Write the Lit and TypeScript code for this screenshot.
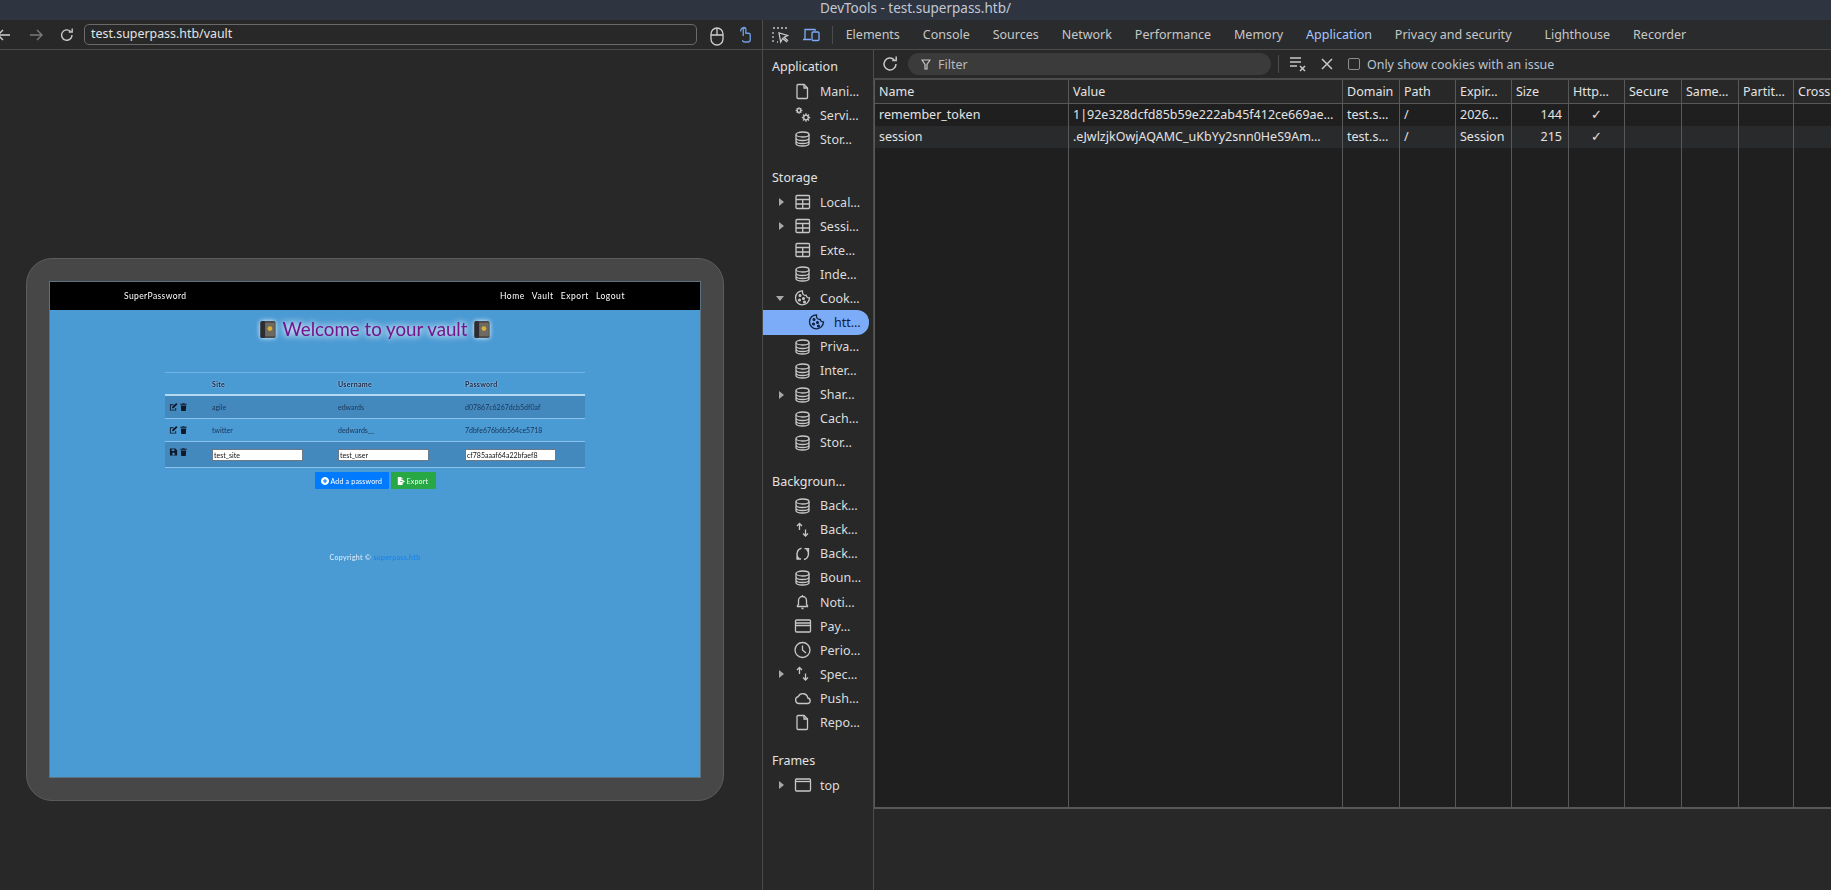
import { LitElement, html, css, svg } from 'lit';
import { customElement } from 'lit/decorators.js';

const paths: Record<string, unknown> = {
  file: svg`<path d="M4 2.500h6l3.500 3.500v9.500a1 1 0 0 1-1 1H4a1 1 0 0 1-1-1v-12a1 1 0 0 1 1-1z"/><path d="M10 2.500V6h3.500"/>`,
  gears: svg`<circle cx="5" cy="4.500" r="1.800"/><path d="M5 1.200v1.300M5 6.500v1.300M1.700 4.500H3M7 4.500h1.300M2.700 2.200l.9.9M6.400 5.900l.9.9M7.300 2.200l-.9.9M3.600 5.900l-.9.9"/><circle cx="12" cy="11.500" r="2.300"/><path d="M12 7.300v1.900M12 13.800v1.900M7.800 11.500h1.900M14.300 11.500h1.900M9 8.500l1.300 1.300M13.700 13.200l1.300 1.300M15 8.500l-1.300 1.300M10.300 13.200L9 14.500"/>`,
  db: svg`<ellipse cx="8.500" cy="4.500" rx="6.500" ry="2.500"/><path d="M2 4.500v9c0 1.400 2.900 2.500 6.500 2.500s6.500-1.100 6.500-2.500v-9M2 8c0 1.400 2.900 2.500 6.500 2.500S15 9.400 15 8M2 11c0 1.400 2.900 2.500 6.500 2.500S15 12.400 15 11"/>`,
  table: svg`<rect x="2" y="2.500" width="13.500" height="13" rx="1"/><path d="M2 6.500h13.500M2 11h13.500M8.700 6.500v9"/>`,
  cookie: svg`<path d="M8.500 1.800a7 7 0 1 0 7 7.200 3 3 0 0 1-3.300-2.700 3 3 0 0 1-3.700-3.300z"/><circle cx="6" cy="6.500" r=".9" fill="currentColor"/><circle cx="5.500" cy="11" r=".9" fill="currentColor"/><circle cx="9.500" cy="9.500" r=".9" fill="currentColor"/><circle cx="10.500" cy="13" r=".9" fill="currentColor"/>`,
  updown: svg`<path d="M5.500 9V2.500M3 5l2.500-2.500L8 5M11.500 8.500V15M9 12.500l2.500 2.500 2.500-2.500"/>`,
  sync: svg`<path d="M7.500 3.200A6 6 0 0 0 5 13.500M3 9.800V14h4M10 14.500A6 6 0 0 0 12.500 4.200M14.500 8V3.700h-4"/>`,
  bell: svg`<path d="M3.500 13.500h10v-1l-1-1V7.500a4 4 0 0 0-8 0v4l-1 1zM7.500 15.500h2M8.500 2v1.500"/>`,
  card: svg`<rect x="1.500" y="3" width="15" height="12" rx="1"/><path d="M1.500 6h15M1.500 8.500h15"/>`,
  clock: svg`<circle cx="8.500" cy="9" r="7.500"/><path d="M8.500 4.500V9l3.500 3"/>`,
  cloud: svg`<path d="M5 14.500a3.500 3.500 0 0 1-.7-6.900 5 5 0 0 1 9.500 1.400 2.800 2.800 0 0 1 .2 5.500z"/>`,
  frame: svg`<rect x="1.500" y="3" width="15" height="12" rx="1"/><path d="M1.500 5.500h15"/>`,
};

function icon(name: string) {
  return html`<svg class="ico" viewBox="0 0 18 18">${paths[name]}</svg>`;
}

type Item = { label?: string; text?: string; icon?: string; arrow?: string; nested?: boolean; selected?: boolean };

const sidebar: Item[] = [
  { label: 'Application' },
  { text: 'Mani…', icon: 'file' },
  { text: 'Servi…', icon: 'gears' },
  { text: 'Stor…', icon: 'db' },
  { label: 'Storage' },
  { text: 'Local…', icon: 'table', arrow: 'right' },
  { text: 'Sessi…', icon: 'table', arrow: 'right' },
  { text: 'Exte…', icon: 'table' },
  { text: 'Inde…', icon: 'db' },
  { text: 'Cook…', icon: 'cookie', arrow: 'down' },
  { text: 'htt…', icon: 'cookie', nested: true, selected: true },
  { text: 'Priva…', icon: 'db' },
  { text: 'Inter…', icon: 'db' },
  { text: 'Shar…', icon: 'db', arrow: 'right' },
  { text: 'Cach…', icon: 'db' },
  { text: 'Stor…', icon: 'db' },
  { label: 'Backgroun…' },
  { text: 'Back…', icon: 'db' },
  { text: 'Back…', icon: 'updown' },
  { text: 'Back…', icon: 'sync' },
  { text: 'Boun…', icon: 'db' },
  { text: 'Noti…', icon: 'bell' },
  { text: 'Pay…', icon: 'card' },
  { text: 'Perio…', icon: 'clock' },
  { text: 'Spec…', icon: 'updown', arrow: 'right' },
  { text: 'Push…', icon: 'cloud' },
  { text: 'Repo…', icon: 'file' },
  { label: 'Frames' },
  { text: 'top', icon: 'frame', arrow: 'right' },
];

const tabs = ['Elements', 'Console', 'Sources', 'Network', 'Performance', 'Memory', 'Application', 'Privacy and security', 'Lighthouse', 'Recorder'];

const columns = [
  ['Name', 194], ['Value', 274], ['Domain', 57], ['Path', 56], ['Expir…', 56], ['Size', 57],
  ['Http…', 56], ['Secure', 57], ['Same…', 57], ['Partit…', 55], ['Cross', 60],
] as const;

const cookies = [
  ['remember_token', '1|92e328dcfd85b59e222ab45f412ce669ae…', 'test.s…', '/', '2026…', '144', '✓'],
  ['session', '.eJwlzjkOwjAQAMC_uKbYy2snn0HeS9Am…', 'test.s…', '/', 'Session', '215', '✓'],
];

@customElement('vault-page')
export class VaultPage extends LitElement {
  static styles = css`
    :host {
      display: flex;
      flex-direction: column;
      align-items: center;
      width: 650px;
      height: 495px;
      background: #4a9ad4;
      font-family: Lato, sans-serif;
      filter: blur(0.45px);
      box-shadow: 0 0 0 1px #5b7280;
    }
    nav {
      align-self: stretch;
      height: 28px;
      background: #000;
      color: #fff;
      font-size: 8.500px;
      letter-spacing: 0.4px;
      display: flex;
      align-items: center;
      padding: 0 75px 0 74px;
    }
    nav .links { margin-left: auto; display: flex; gap: 7px; letter-spacing: 0.55px; }
    h1 {
      margin: 7px 0 0;
      height: 36px;
      display: flex;
      gap: 6px;
      align-items: flex-start;
      font-size: 18.700px;
      line-height: 24px;
      font-weight: 400;
      color: #74148c;
      text-shadow: 0 0 6px #f4faff, 0 0 9px #e8f4ff;
    }
    .safe { width: 18px; height: 19px; margin-top: 3px; filter: drop-shadow(0 0 2.500px #f4faff); }
    table {
      margin-top: 19px;
      width: 420px;
      table-layout: fixed;
      border-collapse: collapse;
      font-size: 7px;
      color: #1b3556;
      border-top: 1px solid #71b3e4;
    }
    th {
      height: 21px;
      text-align: left;
      padding: 0 5px;
      font-weight: 700;
      letter-spacing: 0.3px;
      color: #14233f;
      text-shadow: 0 0 2px #cde4f6;
      border-bottom: 2px solid #b4d8f0;
    }
    td { height: 22px; padding: 0 5px; border-bottom: 1px solid #8cc2ea; }
    tr.odd td { background: #4489bd; }
    .row-icons { display: flex; gap: 1px; margin-left: -1px; margin-top: -1px; }
    .row-icons svg { width: 9px; height: 10px; fill: #10182a; }
    tr.edit td { height: 25px; vertical-align: middle; }
    tr.edit .row-icons { margin-top: -5px; }
    .field {
      width: 91px;
      height: 12px;
      box-sizing: border-box;
      background: #fff;
      border: 1px solid #6b7a88;
      color: #111;
      line-height: 10px;
      padding-left: 1px;
      margin-top: 1px;
    }
    .actions { display: flex; gap: 2px; margin-top: 4px; }
    .btn {
      height: 17px;
      display: flex;
      align-items: center;
      gap: 2px;
      padding: 0 5px 0 6px;
      color: #fff;
      font-size: 7px;
      letter-spacing: 0.2px;
      border-radius: 1px;
      white-space: nowrap;
    }
    .btn svg { width: 8px; height: 8px; fill: #fff; flex: none; }
    .btn.add { background: #007bff; width: 63px; }
    .btn.export { background: #28a745; width: 34px; }
    footer { margin-top: 64px; font-size: 7px; letter-spacing: 0.35px; color: #e6f2fb; }
    footer span { color: #1680ea; }
  `;

  safe() {
    return html`<svg class="safe" viewBox="0 0 18 20">
      <rect x="1" y="1" width="16" height="18" rx="2" fill="#4c4a4a" />
      <rect x="1" y="1" width="5" height="18" rx="2" fill="#2d2d31" />
      <rect x="6" y="3" width="10" height="14" fill="#6f6a60" />
      <circle cx="11" cy="9" r="2.500" fill="#d8b13a" />
    </svg>`;
  }

  editIcons(saved: boolean) {
    const first = saved
      ? svg`<path d="M1 1h6l2 2v6H1zM3 2v2h3V2zM5 5.500a1.500 1.500 0 1 0 .01 0z" fill-rule="evenodd"/>`
      : svg`<path d="M1 2h4v1H2v5h5V6h1v3H1zM8 .5l1.500 1.500L5 6.500H3.500V5z"/>`;
    return html`<div class="row-icons">
      <svg viewBox="0 0 10 10">${first}</svg>
      <svg viewBox="0 0 10 10"><path d="M1.500 1.500h2l.5-.7h2l.5.7h2v1h-7zM2 3.200h6l-.5 6.300h-5z" /></svg>
    </div>`;
  }

  render() {
    return html`
      <nav>
        <span>SuperPassword</span>
        <div class="links"><span>Home</span><span>Vault</span><span>Export</span><span>Logout</span></div>
      </nav>
      <h1>${this.safe()}<span>Welcome to your vault</span>${this.safe()}</h1>
      <table>
        <colgroup><col style="width:42px" /><col style="width:126px" /><col style="width:127px" /><col style="width:125px" /></colgroup>
        <tr><th></th><th>Site</th><th>Username</th><th>Password</th></tr>
        <tr class="odd"><td>${this.editIcons(false)}</td><td>agile</td><td>edwards</td><td>d07867c6267dcb5df0af</td></tr>
        <tr><td>${this.editIcons(false)}</td><td>twitter</td><td>dedwards__</td><td>7dbfe676b6b564ce5718</td></tr>
        <tr class="odd edit">
          <td>${this.editIcons(true)}</td>
          <td><div class="field">test_site</div></td>
          <td><div class="field">test_user</div></td>
          <td><div class="field">cf785aaaf64a22bfaef8</div></td>
        </tr>
      </table>
      <div class="actions">
        <div class="btn add">
          <svg viewBox="0 0 10 10"><path d="M5 0a5 5 0 1 0 .01 0zM4.300 2.500h1.400v1.800h1.800v1.400H5.700v1.800H4.300V5.700H2.500V4.300h1.800z" fill-rule="evenodd" /></svg>
          Add a password
        </div>
        <div class="btn export">
          <svg viewBox="0 0 10 10"><path d="M1 0h4v3h2v2H4v1h3v4H1zM5.500 0L7 1.500V2.500H5.500zM7 3.500L10 5.500 7 7.500z" /></svg>
          Export
        </div>
      </div>
      <footer>Copyright © <span>superpass.htb</span></footer>
    `;
  }
}

@customElement('app-root')
export class AppRoot extends LitElement {
  static styles = css`
    :host {
      display: flex;
      flex-direction: column;
      width: 1831px;
      height: 890px;
      overflow: hidden;
      background: #282828;
      color: #e3e3e3;
      font-family: 'Noto Sans', sans-serif;
      font-size: 12px;
    }
    .ico {
      width: 18px;
      height: 18px;
      flex: none;
      fill: none;
      stroke: currentColor;
      stroke-width: 1.300;
      color: #c7c7c7;
    }
    .title {
      height: 20px;
      background: #2f3441;
      color: #c3c8d2;
      font-size: 13.500px;
      line-height: 16px;
      text-align: center;
    }
    .main { flex: 1; display: flex; min-height: 0; }

    .left { width: 762px; flex: none; display: flex; flex-direction: column; border-right: 1px solid #4a4a4a; }
    .urlbar {
      height: 29px;
      flex: none;
      display: flex;
      align-items: center;
      border-bottom: 1px solid #4c4c4c;
      overflow: hidden;
    }
    .nav-ico { width: 16px; height: 16px; fill: none; stroke-width: 1.400; flex: none; }
    .back { margin-left: -4px; stroke: #d0d0d0; }
    .forward { margin-left: 16px; stroke: #7a7a7a; }
    .reload { margin-left: 15px; stroke: #c8c8c8; }
    .address {
      margin-left: 9px;
      width: 613px;
      height: 21px;
      box-sizing: border-box;
      border: 1px solid #6a6a6a;
      border-radius: 5px;
      padding-left: 6px;
      font-size: 12.400px;
      line-height: 18px;
      color: #e3e3e3;
    }
    .mouse { width: 16px; height: 20px; margin-left: 12px; margin-top: 3px; stroke: #d0d0d0; fill: none; stroke-width: 1.300; flex: none; }
    .touch { width: 14px; height: 18px; margin-left: 13px; stroke: #6d9fe6; fill: none; stroke-width: 1.500; flex: none; }
    .viewport { flex: 1; padding: 208px 0 0 26px; }
    .device {
      width: 650px;
      height: 495px;
      padding: 23px;
      border: 1px solid #5c5c5c;
      border-radius: 26px;
      background: #464746;
      box-sizing: content-box;
    }

    .tools { flex: 1; min-width: 0; display: flex; flex-direction: column; }
    .tabs {
      height: 29px;
      flex: none;
      display: flex;
      align-items: center;
      gap: 22.900px;
      border-bottom: 1px solid #4c4c4c;
      background: #2a2b2c;
      font-size: 12.500px;
      color: #c7c7c7;
      white-space: nowrap;
      overflow: hidden;
    }
    .tab-ico { width: 18px; height: 18px; fill: none; stroke-width: 1.300; flex: none; }
    .tabs .inspect { margin-left: 8px; stroke: #c7c7c7; }
    .tabs .devices { margin-left: -10px; stroke: #7cacf8; }
    .tabs .sep { width: 1px; height: 18px; background: #4c4c4c; margin: 0 -10px 0 -11px; }
    .tabs .active { color: #a8c7fa; }
    .tabs .spaced { margin-left: 10px; }
    .body { flex: 1; min-height: 0; display: flex; }
    .side { width: 110px; flex: none; border-right: 1px solid #4c4c4c; padding-top: 5px; }
    .side .label { height: 24.100px; line-height: 24px; padding-left: 9px; font-size: 12.500px; color: #e3e3e3; }
    .side .label.gap { margin-top: 14.500px; }
    .row { height: 24.100px; display: flex; align-items: center; position: relative; font-size: 12.500px; color: #dcdcdc; padding-left: 31px; }
    .row .ico { margin-right: 8px; }
    .row.nested { padding-left: 45px; }
    .row.selected {
      background: #7cacf8;
      color: #10203a;
      border-radius: 0 12px 12px 0;
      margin-right: 4px;
    }
    .row.selected .ico { color: #10203a; }
    .arrow { position: absolute; left: 16px; top: 8px; width: 0; height: 0; border-left: 5px solid #a8a8a8; border-top: 4px solid transparent; border-bottom: 4px solid transparent; }
    .arrow.down { left: 13px; top: 10px; border-top: 5px solid #a8a8a8; border-left: 4px solid transparent; border-right: 4px solid transparent; border-bottom: 0; }

    .content { flex: 1; min-width: 0; display: flex; flex-direction: column; }
    .filterbar {
      height: 28px;
      flex: none;
      display: flex;
      align-items: center;
      border-bottom: 2px solid #4c4c4c;
      font-size: 12.500px;
    }
    .refresh { width: 18px; height: 18px; margin-left: 7px; stroke: #c7c7c7; fill: none; stroke-width: 1.500; flex: none; }
    .filter {
      margin-left: 9px;
      width: 363px;
      height: 22px;
      border-radius: 11px;
      background: #3b3b3b;
      display: flex;
      align-items: center;
      gap: 7px;
      padding-left: 13px;
      box-sizing: border-box;
      color: #b9b9b9;
    }
    .filter svg { width: 10px; height: 11px; stroke: #c7c7c7; fill: none; stroke-width: 1.200; }
    .fsep { width: 1px; height: 18px; background: #4c4c4c; margin: 0 10px 0 7px; }
    .clear { width: 18px; height: 18px; stroke: #c7c7c7; fill: none; stroke-width: 1.500; flex: none; }
    .close { width: 14px; height: 14px; margin-left: 13px; stroke: #c7c7c7; fill: none; stroke-width: 1.500; flex: none; }
    .check { width: 12px; height: 12px; margin: 0 7px 0 14px; box-sizing: border-box; border: 1.500px solid #8e8e8e; border-radius: 2px; flex: none; }
    .issue { color: #b8c4d4; font-size: 12.450px; }
    .grid-wrap { height: 729px; flex: none; overflow: hidden; border-bottom: 2px solid #585858; box-sizing: border-box; }
    .grid {
      table-layout: fixed;
      border-collapse: collapse;
      width: 959px;
      height: 100%;
      font-size: 12.500px;
      color: #e3e3e3;
      background: #1f1f1f;
    }
    .grid th, .grid td {
      border-left: 1px solid #585858;
      padding: 0 4px;
      text-align: left;
      white-space: nowrap;
      overflow: hidden;
      font-weight: 400;
    }
    .grid th { height: 23px; background: #282828; border-bottom: 1px solid #585858; }
    .grid td { height: 22px; padding-bottom: 1px; box-sizing: border-box; }
    .grid tr.alt td { background: #292a2c; }
    .grid tr.fill td { height: auto; }
    .grid .num { text-align: right; padding-right: 6px; }
    .grid .mid { text-align: center; }
  `;

  render() {
    return html`
      <div class="title">DevTools - test.superpass.htb/</div>
      <div class="main">
        <section class="left">
          <div class="urlbar">
            <svg class="nav-ico back" viewBox="0 0 16 16"><path d="M14 8H2M7 3L2 8l5 5" /></svg>
            <svg class="nav-ico forward" viewBox="0 0 16 16"><path d="M2 8h12M9 3l5 5-5 5" /></svg>
            <svg class="nav-ico reload" viewBox="0 0 16 16"><path d="M13 8a5.200 5.200 0 1 1-1.600-3.700M13.200 1.500v3.500H9.700" /></svg>
            <div class="address">test.superpass.htb/vault</div>
            <svg class="mouse" viewBox="0 0 16 20"><rect x="2" y="2" width="12" height="17" rx="6" /><path d="M2 9h12M8 2v7" /></svg>
            <svg class="touch" viewBox="0 0 16 20"><path d="M6 11V3.500a1.500 1.500 0 0 1 3 0V8h3a2 2 0 0 1 2 2v5a3 3 0 0 1-3 3H8a3 3 0 0 1-3-2M3 6a4 4 0 0 1 6-4" /></svg>
          </div>
          <div class="viewport"><div class="device"><vault-page></vault-page></div></div>
        </section>
        <section class="tools">
          <div class="tabs">
            <svg class="tab-ico inspect" viewBox="0 0 18 18"><path d="M2 2h2M6 2h2M10 2h2M14 2h2M2 6v2M2 10v2M2 14v2M6 16h1" /><path d="M8 7l1.700 9 2-3.500 3.800 3 1-1.200-3.500-3 3.500-1.800z" /></svg>
            <svg class="tab-ico devices" viewBox="0 0 18 18"><path d="M3 13V3.500h10V5M1 13.500h8" /><rect x="10" y="6" width="7" height="8.500" rx="1" /></svg>
            <span class="sep"></span>
            ${tabs.map((t) => html`<span class="${t === 'Application' ? 'active' : t === 'Lighthouse' ? 'spaced' : ''}">${t}</span>`)}
          </div>
          <div class="body">
            <aside class="side">
              ${sidebar.map((it, i) =>
                it.label
                  ? html`<div class="label ${i ? 'gap' : ''}">${it.label}</div>`
                  : html`<div class="row ${it.nested ? 'nested' : ''} ${it.selected ? 'selected' : ''}">
                      ${it.arrow ? html`<span class="arrow ${it.arrow === 'down' ? 'down' : ''}"></span>` : ''}
                      ${icon(it.icon!)}<span>${it.text}</span>
                    </div>`,
              )}
            </aside>
            <div class="content">
              <div class="filterbar">
                <svg class="refresh" viewBox="0 0 18 18"><path d="M15 9a6 6 0 1 1-1.800-4.300M15.200 1.500v4h-4" /></svg>
                <div class="filter"><svg viewBox="0 0 10 11"><path d="M1 1h8L6 5.500V10H4V5.500z" /></svg>Filter</div>
                <span class="fsep"></span>
                <svg class="clear" viewBox="0 0 18 18"><path d="M1 3h11M1 7h11M1 11h7M11 11l5 5M16 11l-5 5" /></svg>
                <svg class="close" viewBox="0 0 14 14"><path d="M2 2l10 10M12 2L2 12" /></svg>
                <span class="check"></span>
                <span class="issue">Only show cookies with an issue</span>
              </div>
              <div class="grid-wrap">
                <table class="grid">
                  <colgroup>${columns.map((c) => html`<col style="width:${c[1]}px" />`)}</colgroup>
                  <tr>${columns.map((c) => html`<th>${c[0]}</th>`)}</tr>
                  ${cookies.map(
                    (row, i) => html`<tr class="${i ? 'alt' : ''}">
                      ${columns.map((_, j) => html`<td class="${j === 5 ? 'num' : j === 6 ? 'mid' : ''}">${row[j] ?? ''}</td>`)}
                    </tr>`,
                  )}
                  <tr class="fill">${columns.map(() => html`<td></td>`)}</tr>
                </table>
              </div>
            </div>
          </div>
        </section>
      </div>
    `;
  }
}
